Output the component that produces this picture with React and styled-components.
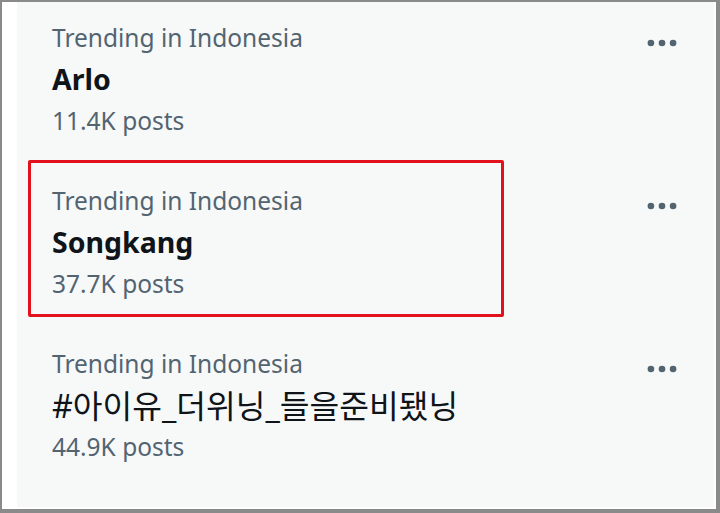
import React from "react";
import styled, { createGlobalStyle } from "styled-components";

const GlobalStyle = createGlobalStyle`
  html, body {
    margin: 0;
    padding: 0;
    background: #ffffff;
  }
`;

const Frame = styled.div`
  box-sizing: border-box;
  width: 720px;
  height: 513px;
  display: flex;
  border-style: solid;
  border-color: #8a8a8a;
  border-width: 2px 4px 4px 2px;
  padding: 0 2px 2px 15px;
  background: #ffffff;
`;

const Panel = styled.div`
  flex: 1;
  display: flex;
  flex-direction: column;
  background: #f7f9f9;
  font-family: "Noto Sans", "Noto Sans CJK KR", sans-serif;
`;

const Item = styled.div`
  position: relative;
  display: flex;
  justify-content: space-between;
  align-items: flex-start;
  height: 163px;
  box-sizing: border-box;
  padding: 15px 33px 0 35px;
`;

const Texts = styled.div`
  display: flex;
  flex-direction: column;
`;

const Meta = styled.div`
  font-size: 24.5px;
  line-height: 42px;
  color: #536471;
  white-space: nowrap;
`;

const Name = styled.div`
  font-size: ${(p) => (p.$cjk ? "32.3px" : "28.5px")};
  line-height: 42px;
  margin-top: -1px;
  font-weight: ${(p) => (p.$cjk ? 400 : 700)};
  color: #0f1419;
  white-space: nowrap;
`;

const More = styled.svg`
  width: 38px;
  height: 38px;
  margin-top: 7px;
  fill: #536471;
`;

const Highlight = styled.div`
  position: absolute;
  left: 11px;
  top: -5px;
  width: 476px;
  height: 157px;
  box-sizing: border-box;
  border: 3px solid #e3111b;
  border-radius: 2px;
  pointer-events: none;
`;

const trends = [
  { name: "Arlo", posts: "11.4K posts" },
  { name: "Songkang", posts: "37.7K posts", marked: true },
  { name: "#아이유_더위닝_들을준비됐닝", posts: "44.9K posts", cjk: true },
];

function MoreIcon() {
  return (
    <More viewBox="0 0 24 24" aria-hidden="true">
      <circle cx="5" cy="12" r="2.1" />
      <circle cx="12" cy="12" r="2.1" />
      <circle cx="19" cy="12" r="2.1" />
    </More>
  );
}

export default function App() {
  return (
    <>
      <GlobalStyle />
      <Frame>
        <Panel>
          {trends.map((t) => (
            <Item key={t.name}>
              {t.marked && <Highlight />}
              <Texts>
                <Meta>Trending in Indonesia</Meta>
                <Name $cjk={t.cjk}>{t.name}</Name>
                <Meta>{t.posts}</Meta>
              </Texts>
              <MoreIcon />
            </Item>
          ))}
        </Panel>
      </Frame>
    </>
  );
}
